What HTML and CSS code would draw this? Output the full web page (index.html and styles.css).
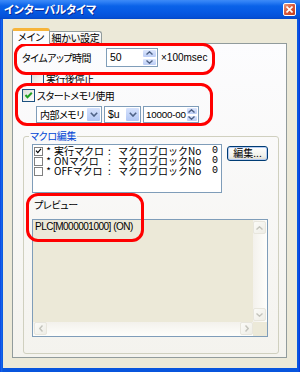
FILE: index.html
```html
<!DOCTYPE html>
<html lang="ja">
<head>
<meta charset="utf-8">
<link rel="stylesheet" href="styles.css">
</head>
<body>
<div class="window">
  <div class="titlebar">
    <span class="title">インターバルタイマ</span>
    <span class="close"><svg width="7" height="7" viewBox="0 0 7 7"><path d="M0.5 0.5L6.5 6.5M6.5 0.5L0.5 6.5" stroke="#fff" stroke-width="1.6"/></svg></span>
  </div>
  <div class="client">
    <div class="tabs">
      <div class="tab sel">メイン</div>
      <div class="tab">細かい設定</div>
    </div>
    <div class="panel">
      <div class="row r1">
        <span class="lbl">タイムアップ時間</span>
        <div class="edit e50">
          <span class="val">50</span>
          <span class="spin">
            <span class="sb"><svg width="7" height="4" viewBox="0 0 7 4"><path d="M0.5 3.5L3.5 0.8L6.5 3.5" fill="none" stroke="#4D6185" stroke-width="1.4"/></svg></span>
            <span class="sb"><svg width="7" height="4" viewBox="0 0 7 4"><path d="M0.5 0.5L3.5 3.2L6.5 0.5" fill="none" stroke="#4D6185" stroke-width="1.4"/></svg></span>
          </span>
        </div>
        <span class="unit">×100msec</span>
      </div>
      <div class="cbrow r2">
        <span class="cb"></span><span class="cbtext">実行後停止</span>
      </div>
      <div class="cbrow r3">
        <span class="cb"><svg width="11" height="11" viewBox="0 0 11 11"><path d="M2.5 5L4.5 7.3L8.8 2.8" fill="none" stroke="#21A121" stroke-width="2"/></svg></span><span class="cbtext">スタートメモリ使用</span>
      </div>
      <div class="row r4">
        <div class="combo c1"><span class="val">内部メモリ</span><span class="drop"><svg width="8" height="5" viewBox="0 0 8 5"><path d="M0.8 0.8L4 4L7.2 0.8" fill="none" stroke="#4D6185" stroke-width="1.6"/></svg></span></div>
        <div class="combo c2"><span class="val">$u</span><span class="drop"><svg width="8" height="5" viewBox="0 0 8 5"><path d="M0.8 0.8L4 4L7.2 0.8" fill="none" stroke="#4D6185" stroke-width="1.6"/></svg></span></div>
        <div class="edit e10">
          <span class="val">10000-00</span>
          <span class="spin">
            <span class="sb"><svg width="7" height="4" viewBox="0 0 7 4"><path d="M0.5 3.5L3.5 0.8L6.5 3.5" fill="none" stroke="#4D6185" stroke-width="1.4"/></svg></span>
            <span class="sb"><svg width="7" height="4" viewBox="0 0 7 4"><path d="M0.5 0.5L3.5 3.2L6.5 0.5" fill="none" stroke="#4D6185" stroke-width="1.4"/></svg></span>
          </span>
        </div>
      </div>
      <fieldset class="group">
        <legend>マクロ編集</legend>
        <div class="macro">
          <div class="listbox">
            <div class="li"><span class="lcb"><svg width="8" height="8" viewBox="0 0 8 8"><path d="M1.2 3.6L3.2 5.8L6.8 1.6" fill="none" stroke="#000" stroke-width="1.4"/></svg></span><span class="nm"><span class="star">*</span>実行マクロ</span><span class="co">:</span><span class="bl">マクロブロックNo</span><span class="no">0</span></div>
            <div class="li"><span class="lcb"></span><span class="nm"><span class="star">*</span>ONマクロ</span><span class="co">:</span><span class="bl">マクロブロックNo</span><span class="no">0</span></div>
            <div class="li"><span class="lcb"></span><span class="nm"><span class="star">*</span>OFFマクロ</span><span class="co">:</span><span class="bl">マクロブロックNo</span><span class="no">0</span></div>
          </div>
          <div class="btn">編集...</div>
        </div>
        <div class="pvlabel">プレビュー</div>
        <div class="preview">
          <div class="pvtext">PLC[M000001000] (ON)</div>
          <div class="vscroll">
            <span class="sa"><svg width="7" height="4" viewBox="0 0 7 4"><path d="M0.5 3.5L3.5 0.8L6.5 3.5" fill="none" stroke="#C4C4BC" stroke-width="1.4"/></svg></span>
            <span class="sa"><svg width="7" height="4" viewBox="0 0 7 4"><path d="M0.5 0.5L3.5 3.2L6.5 0.5" fill="none" stroke="#C4C4BC" stroke-width="1.4"/></svg></span>
          </div>
          <div class="hscroll">
            <span class="sa"><svg width="4" height="7" viewBox="0 0 4 7"><path d="M3.5 0.5L0.8 3.5L3.5 6.5" fill="none" stroke="#C4C4BC" stroke-width="1.4"/></svg></span>
            <span class="sa"><svg width="4" height="7" viewBox="0 0 4 7"><path d="M0.5 0.5L3.2 3.5L0.5 6.5" fill="none" stroke="#C4C4BC" stroke-width="1.4"/></svg></span>
          </div>
          <div class="corner"></div>
        </div>
      </fieldset>
      <div class="mark m1"></div>
      <div class="mark m2"></div>
      <div class="mark m3"></div>
    </div>
  </div>
</div>
</body>
</html>
```

FILE: styles.css
```css
* { box-sizing: border-box; }
html, body { margin: 0; padding: 0; }
body {
  width: 300px;
  height: 372px;
  overflow: hidden;
  font-family: "Noto Sans CJK JP", "Noto Sans", sans-serif;
  font-size: 10px;
  color: #000;
  font-feature-settings: "palt";
  white-space: nowrap;
}
.window {
  width: 300px;
  height: 372px;
  display: flex;
  flex-direction: column;
  background: linear-gradient(to right, #0831D9 0, #166AEE 1px, #0855DD 3px, #0855DD 297px, #0A5BE3 298px, #0831D9 300px);
}
.titlebar {
  height: 19px;
  display: flex;
  align-items: center;
  padding: 0 4px 0 4px;
  background: linear-gradient(#3D8AF7 0, #2D7FF5 2px, #0A62E8 6px, #0659E3 12px, #0451D8 17px, #0347C8 19px);
}
.title {
  color: #fff;
  font-weight: bold;
  font-size: 11px;
  line-height: 13px;
  text-shadow: 1px 1px 0 #0A2C98;
}
.close {
  margin-left: auto;
  width: 13px;
  height: 13px;
  border: 1px solid #fff;
  border-radius: 2px;
  background: linear-gradient(135deg, #E89A7E, #D8573A 50%, #C23E1C);
  display: flex;
  align-items: center;
  justify-content: center;
}
.client {
  flex: 1;
  margin: 0 3px 4px 3px;
  background: #ECE9D8;
  padding: 9px 0 0 9px;
}
.tabs {
  height: 15px;
  display: flex;
  align-items: flex-end;
}
.tab {
  height: 12px;
  width: 52px;
  border: 1px solid #919B9C;
  border-bottom: none;
  border-left: none;
  border-radius: 0 3px 0 0;
  background: linear-gradient(#FFFFFF, #F4F4F0 60%, #E9E8E2);
  line-height: 11px;
  text-align: center;
  letter-spacing: -0.2px;
}
.tab.sel {
  width: 38px;
  height: 16px;
  margin-bottom: -1px;
  position: relative;
  z-index: 1;
  border-left: 1px solid #919B9C;
  border-top: 3px solid #F7B43A;
  border-radius: 3px 3px 0 0;
  background: #FCFCFE;
  line-height: 12px;
  letter-spacing: 0;
}
.panel {
  position: relative;
  width: 275px;
  height: 315px;
  border: 1px solid #919B9C;
  background: linear-gradient(#FCFCFE, #F4F3EE);
  padding-left: 9px;
}
.row { display: flex; align-items: center; }
.r1 { margin-top: 4px; height: 19px; }
.lbl { width: 84px; line-height: 13px; letter-spacing: -0.5px; }
.edit {
  height: 19px;
  border: 1px solid #7F9DB9;
  background: #fff;
  display: flex;
  align-items: center;
  font-family: "Liberation Sans", sans-serif;
  font-size: 10.5px;
}
.edit .val { flex: 1; padding-left: 3px; line-height: 13px; }
.e50 { width: 52px; }
.spin {
  width: 15px;
  height: 17px;
  display: flex;
  flex-direction: column;
}
.sb {
  flex: 1;
  border: 1px solid #fff;
  border-radius: 2px;
  background: linear-gradient(#DCE6FD, #BBCDF6);
  display: flex;
  align-items: center;
  justify-content: center;
}
.unit {
  margin-left: 3px;
  font-size: 10px;
  line-height: 13px;
  font-feature-settings: normal;
  font-family: "Liberation Sans", "Noto Sans CJK JP", sans-serif;
}
.cbrow {
  display: flex;
  align-items: center;
  height: 13px;
}
.r2 { margin-top: 5px; margin-left: 9px; }
.r3 { margin-top: 4px; }
.cb {
  width: 13px;
  height: 13px;
  border: 1px solid #1C5180;
  background: linear-gradient(135deg, #DCDCD7, #FFFFFF);
  display: flex;
  align-items: center;
  justify-content: center;
}
.cbtext { margin-left: 2px; line-height: 13px; letter-spacing: -0.5px; }
.r4 { margin-top: 4px; margin-left: 14px; height: 17px; gap: 2px; }
.combo {
  height: 17px;
  border: 1px solid #7F9DB9;
  background: #fff;
  display: flex;
  align-items: center;
}
.combo .val { flex: 1; padding-left: 3px; line-height: 13px; overflow: hidden; letter-spacing: -0.5px; }
.c1 { width: 66px; }
.c2 { width: 37px; }
.c2 .val { font-family: "Liberation Sans", sans-serif; font-size: 10.5px; letter-spacing: 0; }
.drop {
  width: 15px;
  height: 15px;
  flex: none;
  border: 1px solid #fff;
  border-radius: 2px;
  background: linear-gradient(#D6E2FC, #B2C7F4);
  display: flex;
  align-items: center;
  justify-content: center;
}
.e10 { width: 56px; height: 17px; }
.e10 .spin { height: 15px; }
.e10 .val { font-size: 9.8px; padding-left: 2px; letter-spacing: -0.2px; }
.group {
  margin: 6px 0 0 1px;
  padding: 0;
  width: 256px;
  height: 225px;
  border: 1px solid #D0D0BF;
  border-radius: 3px;
  min-width: 0;
}
.group legend {
  margin-left: 5px;
  padding: 0 1px;
  color: #0046D5;
  line-height: 14px;
  letter-spacing: -0.3px;
}
.macro {
  display: flex;
  align-items: flex-start;
  margin: 1px 0 0 8px;
}
.listbox {
  width: 190px;
  height: 49px;
  border: 1px solid #7F9DB9;
  background: #fff;
  padding: 1px 0 0 1px;
  font-size: 10px;
  font-feature-settings: normal;
}
.li {
  display: flex;
  align-items: center;
  height: 10px;
  line-height: 10px;
}
.lcb {
  width: 9px;
  height: 9px;
  flex: none;
  border: 1px solid #808080;
  background: #fff;
  display: flex;
  align-items: center;
  justify-content: center;
}
.nm { width: 65px; }
.star { display: inline-block; width: 11px; text-align: center; }
.co { width: 10px; }
.bl { width: 86px; }
.no { width: 14px; text-align: right; font-family: "Liberation Mono", monospace; }
.btn {
  margin: 2px 0 0 5px;
  width: 41px;
  height: 15px;
  border: 1px solid #003C74;
  border-radius: 3px;
  background: linear-gradient(#FFFFFF, #F0F0EA 70%, #DCD9CD);
  box-shadow: inset 0 0 0 1px #B6CCF2;
  text-align: center;
  line-height: 12px;
}
.pvlabel { margin: 6px 0 0 10px; line-height: 12px; letter-spacing: -0.3px; }
.preview {
  margin: 8px 0 0 8px;
  width: 236px;
  height: 118px;
  border: 1px solid #7F9DB9;
  background: #ECE9D8;
  display: grid;
  grid-template-columns: 1fr 14px;
  grid-template-rows: 1fr 14px;
}
.pvtext {
  padding: 1px 0 0 2px;
  line-height: 12px;
  font-family: "Liberation Sans", sans-serif;
  font-size: 10px;
  letter-spacing: -0.5px;
}
.vscroll {
  display: flex;
  flex-direction: column;
  justify-content: space-between;
  background: linear-gradient(to right, #F3F1EC, #FEFEFB);
  padding: 1px 0 1px 0;
}
.hscroll {
  display: flex;
  justify-content: space-between;
  background: linear-gradient(#F3F1EC, #FEFEFB);
  padding: 0 0 0 1px;
}
.sa {
  width: 13px;
  height: 13px;
  border: 1px solid #E8E6DD;
  border-radius: 2px;
  background: linear-gradient(135deg, #FBFBF8, #EEEDE6);
  display: flex;
  align-items: center;
  justify-content: center;
}
.corner { background: #ECE9D8; }
.mark {
  position: absolute;
  border: 3px solid #FF0000;
  border-radius: 12px;
  pointer-events: none;
}
.m1 { left: 1px; top: -1px; width: 201px; height: 32px; }
.m2 { left: 2px; top: 39px; width: 198px; height: 43px; }
.m3 { left: 13px; top: 149px; width: 118px; height: 49px; }
```
